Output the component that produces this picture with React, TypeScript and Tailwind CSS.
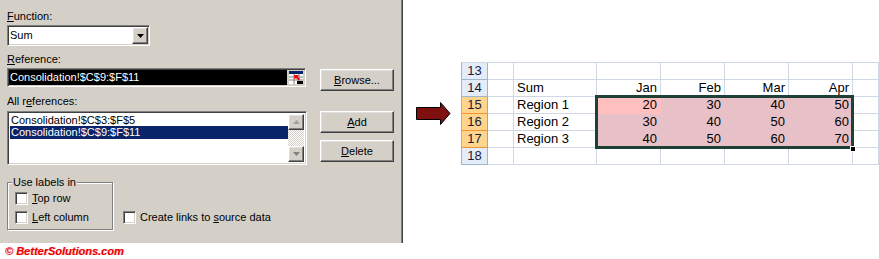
import React from "react";

const raised =
  "border border-t-white border-l-white border-r-[#404040] border-b-[#404040] shadow-[inset_-1px_-1px_0_#808080,inset_1px_1px_0_#dfdfdf]";
const sunken =
  "border border-t-[#808080] border-l-[#808080] border-r-white border-b-white shadow-[inset_1px_1px_0_#404040,inset_-1px_-1px_0_#d4d0c8]";

function Check({ children }: { children: React.ReactNode }) {
  return (
    <div className="flex items-center h-[13px]">
      <div className={`w-[13px] h-[13px] bg-white ${sunken}`} />
      <span className="ml-[4px]">{children}</span>
    </div>
  );
}

function Btn({ children, className = "" }: { children: React.ReactNode; className?: string }) {
  return (
    <div className={`w-[74px] h-[22px] bg-[#D4D0C8] flex items-center justify-center ${raised} ${className}`}>
      {children}
    </div>
  );
}

function Arrow({ up }: { up?: boolean }) {
  return (
    <div className={`w-[16px] h-[16px] bg-[#D4D0C8] flex items-center justify-center ${raised}`}>
      <svg width="7" height="4" viewBox="0 0 7 4">
        {up ? <path d="M3.5 0 L7 4 L0 4 Z" fill="#a0a0a0" /> : <path d="M0 0 L7 0 L3.5 4 Z" fill="#808080" />}
      </svg>
    </div>
  );
}

function Dialog() {
  return (
    <div className="w-[401px] h-[243px] bg-[#D4D0C8] flex text-[11px] leading-[13px] text-black">
      <div className="ml-[7px] w-[300px] flex flex-col">
        <div className="mt-[10px]">
          <u>F</u>unction:
        </div>
        <div className={`mt-[2px] w-[143px] h-[21px] flex items-center bg-white ${sunken}`}>
          <span className="flex-1 pl-[2px]">Sum</span>
          <div className={`w-[16px] h-[17px] mr-[1px] bg-[#D4D0C8] flex items-center justify-center ${raised}`}>
            <svg width="7" height="4" viewBox="0 0 7 4">
              <path d="M0 0 L7 0 L3.5 4 Z" fill="#000" />
            </svg>
          </div>
        </div>
        <div className="mt-[7px]">
          <u>R</u>eference:
        </div>
        <div className={`mt-[2px] w-[299px] h-[19px] flex p-[1px] bg-white ${sunken}`}>
          <div className="flex-1 bg-black text-white pl-[1px] flex items-center">Consolidation!$C$9:$F$11</div>
          <div className="w-[17px] flex items-center justify-center bg-[#D4D0C8]">
            <svg width="16" height="15" viewBox="0 0 16 15">
              <rect x="1" y="1" width="14" height="13" fill="#fff" />
              <rect x="1" y="1" width="14" height="3" fill="#0a246a" />
              <path d="M1 7 H15 M1 10 H15 M6 4 V14 M11 4 V14" stroke="#808080" strokeWidth="1" />
              <rect x="9" y="11" width="6" height="3" fill="#000" />
              <path d="M6 5 L11 5 L9.5 6.5 L12 9 L10.5 10.5 L8 8 L6.5 9.5 Z" fill="#ff0000" />
            </svg>
          </div>
        </div>
        <div className="mt-[8px]">
          All r<u>e</u>ferences:
        </div>
        <div className={`mt-[3px] w-[300px] h-[54px] flex p-[2px] bg-white ${sunken}`}>
          <div className="flex-1 flex flex-col">
            <div className="h-[12px] pl-[1px] flex items-center">Consolidation!$C$3:$F$5</div>
            <div className="h-[13px] pl-[1px] flex items-center bg-[#0A246A] text-white">Consolidation!$C$9:$F$11</div>
          </div>
          <div className="w-[16px] flex flex-col">
            <Arrow up />
            <div className="flex-1 bg-[repeating-conic-gradient(#ffffff_0_25%,#d4d0c8_0_50%)] bg-[length:2px_2px]" />
            <Arrow />
          </div>
        </div>
        <div className="flex items-start">
          <div className="relative mt-[17px] w-[106px] h-[48px] border border-[#808080] shadow-[1px_1px_0_#fff,inset_1px_1px_0_#fff] pt-[9px] pl-[7px] flex flex-col gap-[6px]">
            <span className="absolute -top-[7px] left-[4px] bg-[#D4D0C8] px-[1px]">Use labels in</span>
            <Check>
              <u>T</u>op row
            </Check>
            <Check>
              <u>L</u>eft column
            </Check>
          </div>
          <div className="ml-[10px] mt-[46px]">
            <Check>
              Create links to <u>s</u>ource data
            </Check>
          </div>
        </div>
      </div>
      <div className="ml-[13px] flex flex-col">
        <Btn className="mt-[69px]">
          <span>
            <u>B</u>rowse...
          </span>
        </Btn>
        <Btn className="mt-[20px]">
          <span>
            <u>A</u>dd
          </span>
        </Btn>
        <Btn className="mt-[7px]">
          <span>
            <u>D</u>elete
          </span>
        </Btn>
      </div>
    </div>
  );
}

const cols = ["", "", "", "Jan", "Feb", "Mar", "Apr", ""];
const rows: { n: number; sel: boolean; cells: string[] }[] = [
  { n: 13, sel: false, cells: ["", "", "", "", "", "", ""] },
  { n: 14, sel: false, cells: ["", "Sum", "Jan", "Feb", "Mar", "Apr", ""] },
  { n: 15, sel: true, cells: ["", "Region 1", "20", "30", "40", "50", ""] },
  { n: 16, sel: true, cells: ["", "Region 2", "30", "40", "50", "60", ""] },
  { n: 17, sel: true, cells: ["", "Region 3", "40", "50", "60", "70", ""] },
  { n: 18, sel: false, cells: ["", "", "", "", "", "", ""] },
];

function Sheet() {
  return (
    <div className="relative w-[418px] grid grid-cols-[26px_26px_83px_64px_64px_64px_64px_1fr] border-t border-l border-t-[#D0D7E5] border-l-[#9EB6CE] font-['Liberation_Sans',Arial,sans-serif] text-[13px] leading-[16px] text-black">
      {rows.map((r) => (
        <React.Fragment key={r.n}>
          <div
            className={`h-[17px] flex items-center justify-center border-r border-b ${
              r.sel ? "bg-[#FFD58D] border-[#F29436]" : "bg-[#E4ECF7] border-[#9EB6CE]"
            } text-[#1a1a3a]`}
          >
            {r.n}
          </div>
          {r.cells.map((c, i) => {
            const inSel = r.sel && i >= 2 && i <= 5;
            const active = r.n === 15 && i === 2;
            const fill = active
              ? "bg-[#FFBFBF] border-[#FFBFBF]"
              : inSel
              ? "bg-[#E8C1C8] border-[#E8C1C8]"
              : "border-[#D0D7E5]";
            const right = i >= 2;
            return (
              <div
                key={i}
                className={`h-[17px] flex items-center border-r border-b overflow-hidden whitespace-nowrap ${fill} ${
                  right ? "justify-end pr-[3px]" : "pl-[3px]"
                }`}
              >
                {c}
              </div>
            );
          })}
        </React.Fragment>
      ))}
      <div className="absolute left-[133px] top-[32px] w-[259px] h-[54px] border-[3px] border-[#1D4037]" />
      <div className="absolute left-[388px] top-[83px] w-[6px] h-[6px] bg-black border border-white" />
    </div>
  );
}

export default function App() {
  return (
    <div className="w-[879px] h-[259px] bg-white flex overflow-hidden font-['Liberation_Sans',Arial,sans-serif]">
      <div className="flex flex-col">
        <div className="flex">
          <Dialog />
          <div className="w-[1px] h-[243px] bg-[#808080]" />
          <div className="w-[1px] h-[243px] bg-[#404040]" />
        </div>
        <div className="mt-[2px] ml-[5px] text-[11px] leading-[13px] font-bold italic text-[#E60000] [text-shadow:1px_0_0_#ffb4b4]">
          © BetterSolutions.com
        </div>
      </div>
      <div className="ml-[13px] mt-[102px]">
        <svg width="35" height="24" viewBox="0 0 35 24">
          <path d="M0.5 5.5 H24.5 V0.5 L34 11.5 L24.5 22.5 V17.5 H0.5 Z" fill="#7F1010" stroke="#000" strokeWidth="1" />
        </svg>
      </div>
      <div className="ml-[10px] mt-[62px]">
        <Sheet />
      </div>
    </div>
  );
}
